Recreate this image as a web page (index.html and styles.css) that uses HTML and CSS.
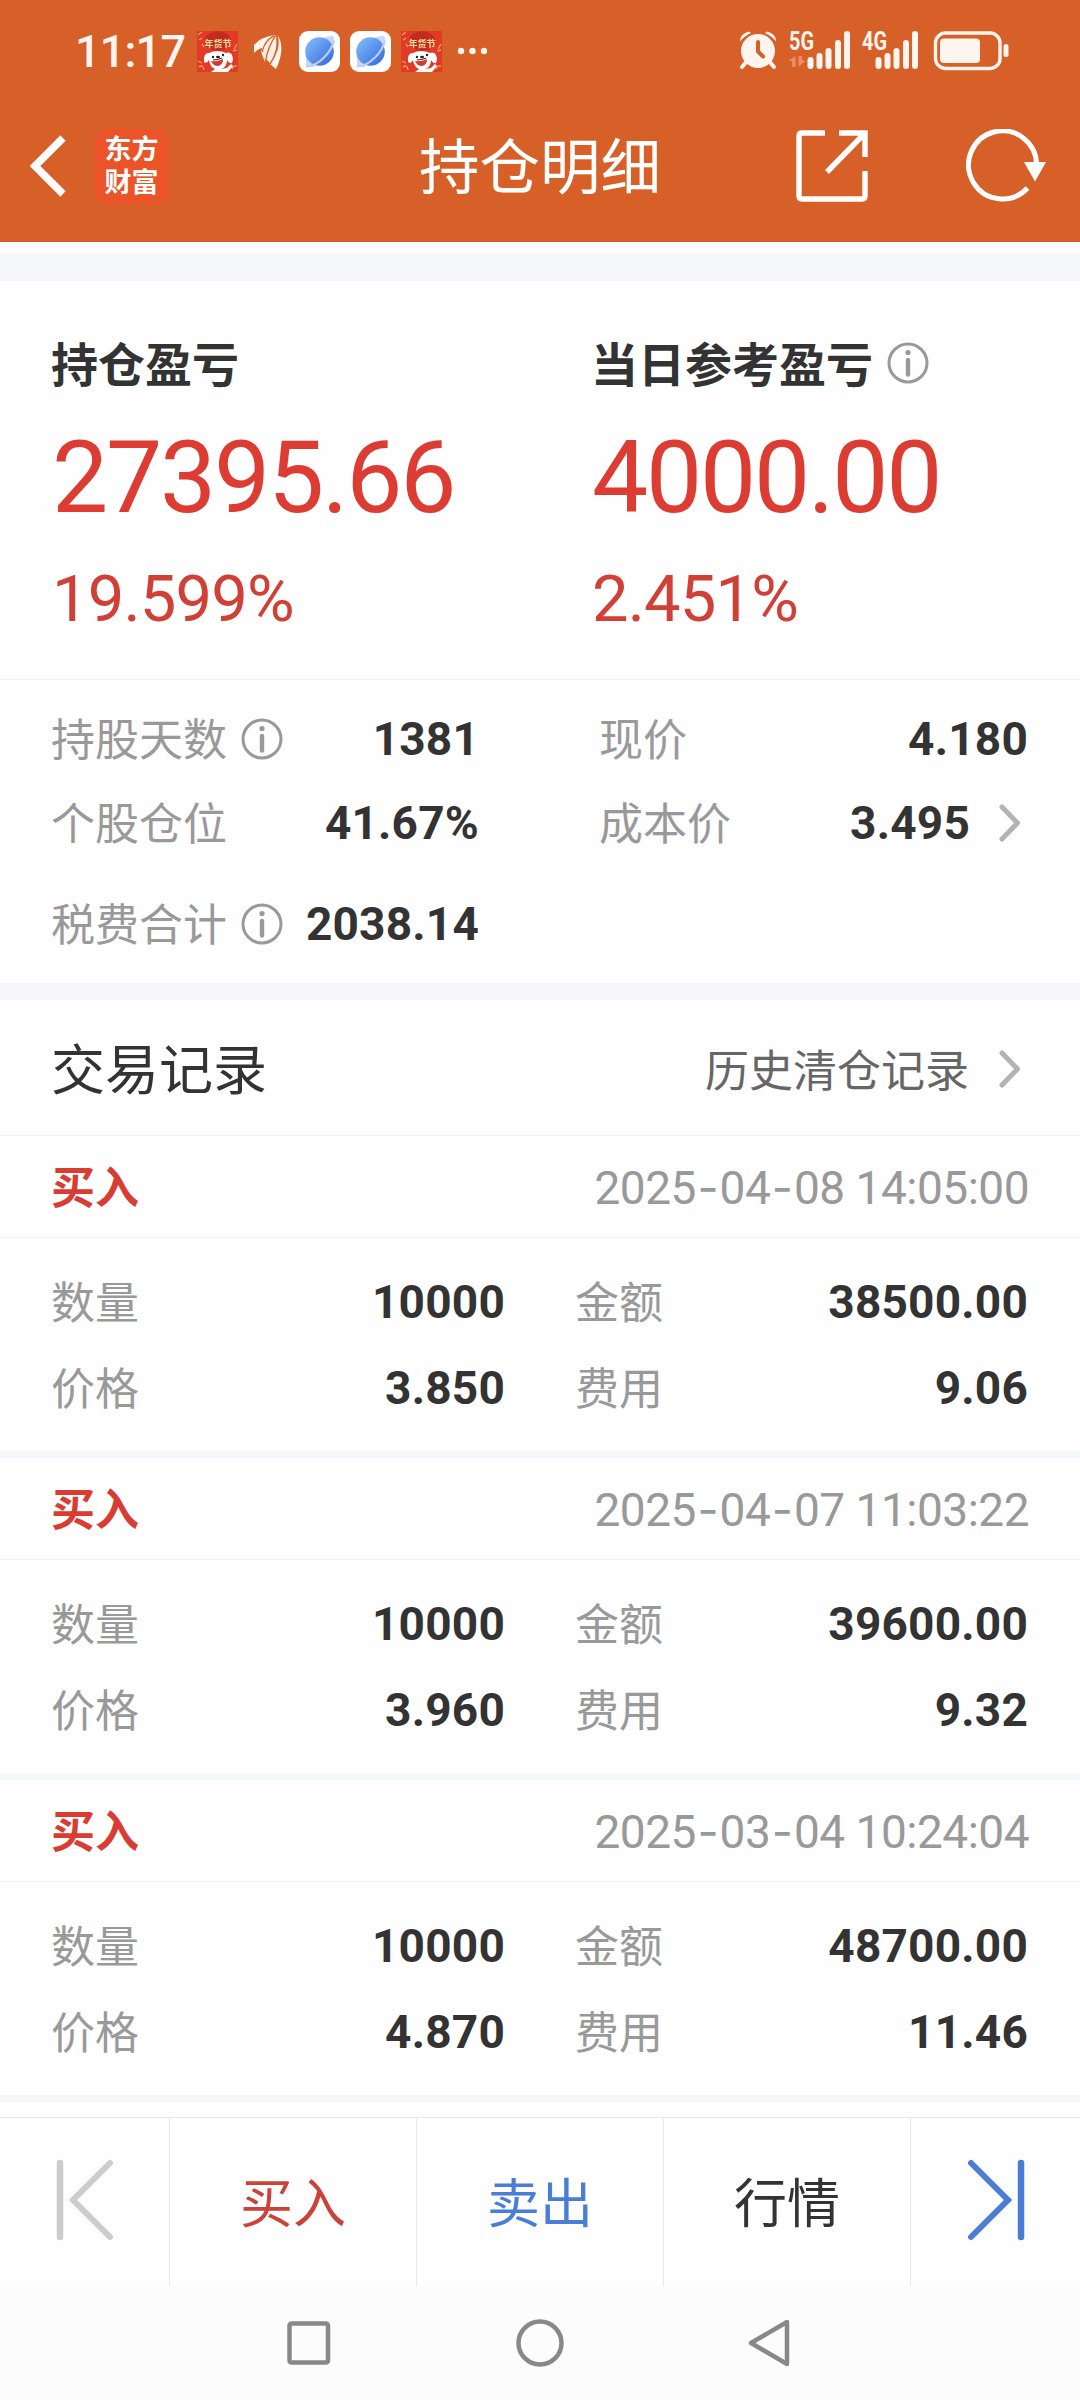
FILE: index.html
```html
<!DOCTYPE html>
<html lang="zh-CN">
<head>
    <meta charset="UTF-8">
    <meta name="viewport" content="width=device-width, initial-scale=1.0">
    <title>持仓明细</title>
    <link rel="stylesheet" href="styles.css">
</head>
<body>
    <!-- shared icons -->
    <svg class="defs" width="0" height="0">
        <defs>
            <linearGradient id="planetFill" x1="0" y1="0" x2="1" y2="1">
                <stop offset="0" stop-color="#84c3fb"/>
                <stop offset="1" stop-color="#3563dc"/>
            </linearGradient>
            <symbol id="info" viewBox="0 0 42 42">
                <circle cx="21" cy="21" r="19" fill="none" stroke="#999" stroke-width="3"/>
                <circle cx="21" cy="10.5" r="2.6" fill="#999"/>
                <path d="M21 18v14.5" stroke="#999" stroke-width="4.4" stroke-linecap="round"/>
            </symbol>
            <symbol id="chevron" viewBox="0 0 22 38">
                <path d="M3 3l15.5 16L3 35" fill="none" stroke="#b3b3b3" stroke-width="5" stroke-linecap="round" stroke-linejoin="round"/>
            </symbol>
            <symbol id="planet" viewBox="0 0 41 41">
                <rect width="41" height="41" rx="9" fill="#fff"/>
                <path d="M24 7q11-4 11 0 0 5-5 11zM7 24v12h9z" fill="#c9d6fa"/>
                <circle cx="20.5" cy="20.5" r="14.3" fill="url(#planetFill)"/>
                <path d="M7 35.5q9 0 18-9 8-8 10-17" fill="none" stroke="#b9d0fb" stroke-width="2.2"/>
            </symbol>
            <symbol id="dog" viewBox="0 0 41 41">
                <rect width="41" height="41" fill="#e23a27"/>
                <ellipse cx="21" cy="10" rx="13" ry="10" fill="#c22c1c"/>
                <path d="M1 4l4-3M2 9l3-2M5 13l2 3M37 18l3-5M36 20l4-1M2 36q4-3 5 3M1 30l4 2M35 38q1-4 5-3" stroke="#eda65c" stroke-width="1.3" fill="none"/>
                <text x="21" y="15.5" class="dog-text">年货节</text>
                <path d="M12 22q8-4 17 0 6-2 7 6l-1 4q-3 1-5-3 0 7-6 9l6-1 4-4 2 2-5 6H14l4-3q-5-2-6-9-2 4-5 2-1-9 5-9z" fill="#fff"/>
                <path d="M14 30q6 1 12-2 0 6-5 7-5 0-7-5z" fill="#d8392e"/>
                <path d="M16 29q5 0 9-2" stroke="#222" fill="none"/>
                <circle cx="16" cy="26" r="1.2" fill="#222"/>
                <circle cx="26" cy="24" r="1.2" fill="#222"/>
                <ellipse cx="21" cy="26" rx="2" ry="1.2" fill="#222"/>
            </symbol>
        </defs>
    </svg>

    <header class="header">
        <div class="status">
            <span class="time">11:17</span>
            <div class="apps">
                <svg class="app"><use href="#dog"/></svg>
                <svg class="app" viewBox="0 0 41 41">
                    <g fill="#fff5ee">
                        <path d="M6 14Q13 6 26 4 17 8 15 17 11 17 6 22z"/>
                        <path d="M27 4Q16 9 13 21l4 10Q20 17 27 4z" opacity=".95"/>
                        <path d="M28 4Q22 14 18 28l4 4Q31 20 28 4z" opacity=".95"/>
                        <path d="M29.500 4Q34 17 22 33l6 5Q38 17 29.500 4z"/>
                    </g>
                    <path d="M26 5Q17 9 14 21M27.500 5Q20 15 17.500 30M29 5Q31 20 22 33" fill="none" stroke="#d75f28" stroke-width="1.2"/>
                </svg>
                <svg class="app"><use href="#planet"/></svg>
                <svg class="app"><use href="#planet"/></svg>
                <svg class="app"><use href="#dog"/></svg>
            </div>
            <svg class="dots" width="30" height="8" fill="#fff5ee">
                <circle cx="4" cy="4" r="3.2"/>
                <circle cx="15.5" cy="4" r="3.2"/>
                <circle cx="27" cy="4" r="3.2"/>
            </svg>
            <svg class="system" width="276" height="60" viewBox="0 -8 276 60" fill="#fff5ee">
                <!-- alarm -->
                <path d="M8 32l-5 6M30 32l5 6" stroke="#fff5ee" stroke-width="4" stroke-linecap="round"/>
                <circle cx="19" cy="22" r="17"/>
                <path d="M1 12.500q0-8 9-10l2 1.5q-7 3-11 8.5zM37 12.500q0-8-9-10l-2 1.5q7 3 11 8.5z"/>
                <path d="M19 13v9.500l5 5" fill="none" stroke="#d75f28" stroke-width="4" stroke-linecap="round"/>
                <!-- signals -->
                <text x="50" y="21" class="net" textLength="25" lengthAdjust="spacingAndGlyphs">5G</text>
                <path d="M56.500 27v11H53v-6h-4zM59.500 27v11l7-6-3.500-1v-4z" fill="#e98c68"/>
                <path d="M71.500 31v6M80.500 27v10M89.500 22v15M99 14v23M108 5v32M139.500 31v6M148.500 27v10M157.500 22v15M167 14v23M176 5v32" stroke="#fff5ee" stroke-width="6" stroke-linecap="round"/>
                <text x="123" y="21" class="net" textLength="25" lengthAdjust="spacingAndGlyphs">4G</text>
                <!-- battery -->
                <rect x="196.5" y="4" width="64.5" height="35.5" rx="10" fill="none" stroke="#fff5ee" stroke-width="3.4"/>
                <rect x="201" y="9.5" width="40" height="24.5" rx="4"/>
                <rect x="264.5" y="15" width="5" height="13" rx="2.5"/>
            </svg>
        </div>
        <div class="titlebar">
            <svg class="back" width="40" height="66" viewBox="0 0 40 66">
                <path d="M35 5L7 33l28 28" fill="none" stroke="#fff" stroke-width="7.5"/>
            </svg>
            <div class="logo"><span>东方</span><span>财富</span></div>
            <h1>持仓明细</h1>
            <svg class="share" width="72" height="72" viewBox="0 0 72 72" fill="none" stroke="#fff" stroke-width="5.4">
                <path d="M29 3H6Q3 3 3 6v60q0 3 3 3h60q3 0 3-3V41M43 3h26v24M68 4L31 42"/>
            </svg>
            <svg class="refresh" width="80" height="74" viewBox="0 0 80 74">
                <path d="M70.500 37a34 34 0 1 0-9 22" fill="none" stroke="#fff" stroke-width="5"/>
                <path d="M58 33h22L69 52.500z" fill="#fff"/>
            </svg>
        </div>
    </header>

    <section class="profit">
        <div class="profit-item">
            <h2>持仓盈亏</h2>
            <div class="amount">27395.66</div>
            <div class="percent">19.599%</div>
        </div>
        <div class="profit-item">
            <h2>当日参考盈亏 <svg class="info"><use href="#info"/></svg></h2>
            <div class="amount">4000.00</div>
            <div class="percent">2.451%</div>
        </div>
    </section>

    <section class="details">
        <div class="detail"><span>持股天数</span><svg class="info"><use href="#info"/></svg><b>1381</b></div>
        <div class="detail"><span>现价</span><b>4.180</b></div>
        <div class="detail"><span>个股仓位</span><b>41.67%</b></div>
        <div class="detail"><span>成本价</span><b>3.495</b><svg class="chevron"><use href="#chevron"/></svg></div>
        <div class="detail"><span>税费合计</span><svg class="info"><use href="#info"/></svg><b>2038.14</b></div>
    </section>

    <main class="records">
        <div class="records-head">
            <h3>交易记录</h3>
            <a class="history">历史清仓记录</a>
            <svg class="chevron"><use href="#chevron"/></svg>
        </div>

        <article class="record">
            <div class="record-head">
                <b>买入</b>
                <time>2025<i>-</i>04<i>-</i>08 14:05:00</time>
            </div>
            <div class="record-body">
                <div class="cell"><span>数量</span><b>10000</b></div>
                <div class="cell"><span>金额</span><b>38500.00</b></div>
                <div class="cell"><span>价格</span><b>3.850</b></div>
                <div class="cell"><span>费用</span><b>9.06</b></div>
            </div>
        </article>

        <article class="record">
            <div class="record-head">
                <b>买入</b>
                <time>2025<i>-</i>04<i>-</i>07 11:03:22</time>
            </div>
            <div class="record-body">
                <div class="cell"><span>数量</span><b>10000</b></div>
                <div class="cell"><span>金额</span><b>39600.00</b></div>
                <div class="cell"><span>价格</span><b>3.960</b></div>
                <div class="cell"><span>费用</span><b>9.32</b></div>
            </div>
        </article>

        <article class="record">
            <div class="record-head">
                <b>买入</b>
                <time>2025<i>-</i>03<i>-</i>04 10:24:04</time>
            </div>
            <div class="record-body">
                <div class="cell"><span>数量</span><b>10000</b></div>
                <div class="cell"><span>金额</span><b>48700.00</b></div>
                <div class="cell"><span>价格</span><b>4.870</b></div>
                <div class="cell"><span>费用</span><b>11.46</b></div>
            </div>
        </article>
    </main>

    <footer class="actions">
        <a class="action">
            <svg width="58" height="82" viewBox="0 0 58 82" fill="none" stroke="#ccc" stroke-linecap="round">
                <path d="M4 4v74" stroke-width="6.5"/>
                <path d="M54 4L17 41l37 37" stroke-width="6"/>
            </svg>
        </a>
        <a class="action buy">买入</a>
        <a class="action sell">卖出</a>
        <a class="action">行情</a>
        <a class="action">
            <svg width="58" height="82" viewBox="0 0 58 82" fill="none" stroke="#4a7dd6" stroke-linecap="round">
                <path d="M54 4v74" stroke-width="6.5"/>
                <path d="M4 4l37 37L4 78" stroke-width="6"/>
            </svg>
        </a>
    </footer>

    <nav class="navbar">
        <svg width="50" height="50" viewBox="0 0 50 50"><rect x="5.5" y="5.5" width="38.5" height="39" rx="2"/></svg>
        <svg width="50" height="50" viewBox="0 0 50 50"><circle cx="25" cy="25" r="21.5"/></svg>
        <svg width="50" height="50" viewBox="0 0 50 50"><path d="M41 4v42L5 25z"/></svg>
    </nav>
</body>
</html>
```
FILE: styles.css
```css
* {
    box-sizing: border-box;
}

body {
    margin: 0;
    width: 1080px;
    height: 2400px;
    display: flex;
    flex-direction: column;
    background: #fefefe;
    color: #333;
    font-family: Roboto, "Noto Sans CJK SC", sans-serif;
    overflow: hidden;
}

h1, h2, h3 {
    margin: 0;
}

.defs {
    position: absolute;
}

/* header */
.header {
    height: 242px;
    background: #d75f28;
    color: #fff;
}

.status {
    height: 102px;
    padding: 0 65px 0 75px;
    display: flex;
    align-items: center;
}

.time {
    width: 122px;
    font-size: 45px;
    font-weight: 500;
    letter-spacing: -0.8px;
    color: #fff5ee;
}

.apps {
    display: flex;
    gap: 10px;
}

.app {
    width: 41px;
    height: 41px;
}

.dog-text {
    font: 700 9px "Noto Sans CJK SC", sans-serif;
    fill: #fbdc9a;
    text-anchor: middle;
}

.dots {
    margin-left: 15px;
}

.system {
    margin-left: auto;
}

.net {
    font: 700 26px Roboto, sans-serif;
}

.titlebar {
    height: 128px;
    display: flex;
    align-items: center;
    padding: 0 34px 0 28px;
}

.logo {
    width: 75px;
    height: 75px;
    margin-left: 26px;
    display: flex;
    flex-direction: column;
    align-items: center;
    justify-content: center;
    gap: 6px;
    padding-bottom: 4px;
    border-radius: 14px;
    background: #eb5428;
    font: 700 27px/27px "Noto Sans CJK SC", sans-serif;
}

h1 {
    width: 240px;
    margin-left: 250px;
    padding-top: 6px;
    font-size: 60.5px;
    font-weight: 400;
    line-height: 80px;
    white-space: nowrap;
}

.share {
    margin-left: 137px;
}

.refresh {
    margin-left: auto;
}

/* profit */
.profit {
    height: 438px;
    padding-top: 39px;
    border-top: 12px solid #fefefe;
    border-bottom: 1px solid #f3f3f3;
    background: linear-gradient(#f6f7fa 27px, #fefefe 27px);
    display: grid;
    grid-template-columns: 540px 540px;
}

.profit-item {
    padding: 32px 0 0 51px;
}

h2 {
    height: 72px;
    display: flex;
    align-items: center;
    gap: 14px;
    font-size: 47px;
    font-weight: 700;
}

h2 .info {
    margin-top: 4px;
}

.info {
    width: 42px;
    height: 42px;
}

.amount {
    height: 160px;
    padding-left: 1px;
    font-size: 100px;
    line-height: 162px;
    letter-spacing: -2.2px;
    color: #dc3c32;
}

.percent {
    height: 88px;
    padding-left: 1px;
    font-size: 65px;
    line-height: 85px;
    letter-spacing: -0.8px;
    color: #d04037;
}

/* details */
.details {
    height: 320px;
    padding: 17px 52px 0 51px;
    border-bottom: 17px solid #f6f7fa;
    display: grid;
    grid-template-columns: 428px 429px;
    grid-template-rows: 84px 84px 118px;
    column-gap: 120px;
}

.detail, .cell {
    display: flex;
    align-items: center;
    font-size: 44px;
    color: #999;
}

.detail span, .cell span, .record-head b, h3 {
    padding-bottom: 4px;
}

.detail b, .cell b {
    margin-left: auto;
    font-size: 46px;
    letter-spacing: 0.2px;
    color: #333;
}

.detail .info {
    margin-left: 14px;
}

.chevron {
    width: 22px;
    height: 38px;
    margin: 0 7px 0 29px;
}

/* records */
.records {
    flex: 1;
}

.records-head {
    height: 136px;
    padding: 2px 52px 0 51px;
    border-bottom: 1px solid #f3f3f3;
    display: flex;
    align-items: center;
}

h3 {
    font-size: 54px;
    font-weight: 400;
}

.history {
    margin-left: auto;
    padding-bottom: 1px;
    font-size: 44px;
    color: #666;
}

.records .chevron {
    margin-left: 30px;
}

.record {
    height: 322px;
    border-bottom: 7px solid #f6f7fa;
}

.record-head {
    height: 102px;
    padding: 0 51px;
    border-bottom: 1px solid #f3f3f3;
    display: flex;
    align-items: center;
    justify-content: space-between;
    font-size: 44px;
}

.record-head b {
    color: #d93c32;
}

time {
    font-size: 46px;
    letter-spacing: -0.5px;
    color: #999;
}

time i {
    margin: 0 1.5px;
    font-family: Inter, sans-serif;
    font-style: normal;
}

.record-body {
    padding: 21px 52px 0 51px;
    display: grid;
    grid-template-columns: 454px 453px;
    grid-template-rows: 86px 86px;
    column-gap: 70px;
}

/* bottom bar */
.actions {
    height: 169px;
    border-top: 1px solid #e8e8e8;
    display: grid;
    grid-template-columns: 170px 247px 247px 247px 169px;
}

.action {
    display: flex;
    align-items: center;
    justify-content: center;
    padding-bottom: 4px;
    border-right: 1px solid #e8e8e8;
    font-size: 53px;
}

.action:last-child {
    border-right: none;
}

.buy {
    color: #cc4138;
}

.sell {
    color: #4a7dd6;
}

.navbar {
    height: 114px;
    background: #fcfcfc;
    display: flex;
    align-items: center;
    justify-content: center;
    gap: 181px;
}

.navbar svg {
    fill: none;
    stroke: #888;
    stroke-width: 4.5;
    stroke-linejoin: round;
}
```
